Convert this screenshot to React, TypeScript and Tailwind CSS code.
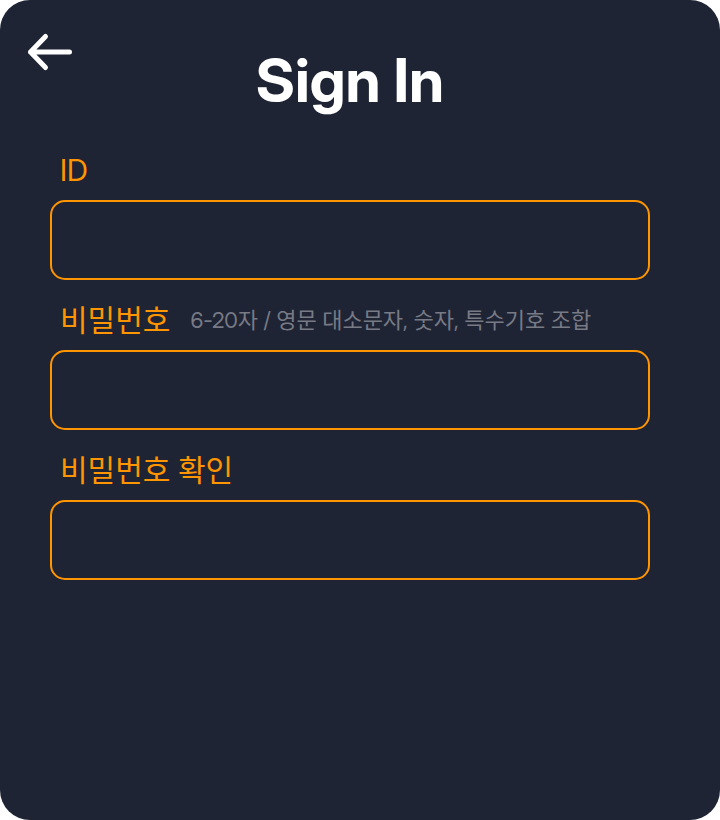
import React from "react";

type FieldProps = {
  id: string;
  label: string;
  type: "text" | "password";
  hint?: string;
};

function Field({ id, label, type, hint }: FieldProps) {
  return (
    <div>
      <div className="flex h-[60px] items-center pl-2.5">
        <label htmlFor={id} className="text-[30px] leading-9 text-[#ff9500]">
          {label}
        </label>
        {hint && (
          <span id={`${id}-hint`} className="pl-5 text-[22px] leading-7 whitespace-nowrap text-[#787a86]">
            {hint}
          </span>
        )}
      </div>
      <input
        id={id}
        type={type}
        aria-describedby={hint ? `${id}-hint` : undefined}
        className="block h-20 w-full rounded-[15px] border-2 border-[#ff9500] bg-transparent px-5 text-[28px] text-white outline-none"
      />
    </div>
  );
}

export default function App() {
  return (
    <main
      lang="ko"
      className="min-h-screen rounded-[30px] bg-[#1e2433] font-['Inter_Display','Inter','Noto_Sans_CJK_KR',sans-serif]"
    >
      <header className="relative pt-[50px] pr-5">
        <button type="button" aria-label="뒤로" className="absolute top-8 left-6 text-white">
          <svg width="52" height="40" viewBox="0 0 52 40" fill="none" stroke="currentColor" strokeWidth="5" strokeLinecap="round" strokeLinejoin="round">
            <path d="M45.5 20H6.5M21.5 4.5L6.5 20L21.5 35.5" />
          </svg>
        </button>
        <h1 className="text-center text-[60px] leading-[60px] font-bold text-white">Sign In</h1>
      </header>
      <form className="mt-[30px] flex flex-col gap-2.5 pr-[70px] pl-[50px]">
        <Field id="user-id" label="ID" type="text" />
        <Field id="password" label="비밀번호" type="password" hint="6-20자 / 영문 대소문자, 숫자, 특수기호 조합" />
        <Field id="password-check" label="비밀번호 확인" type="password" />
      </form>
    </main>
  );
}
